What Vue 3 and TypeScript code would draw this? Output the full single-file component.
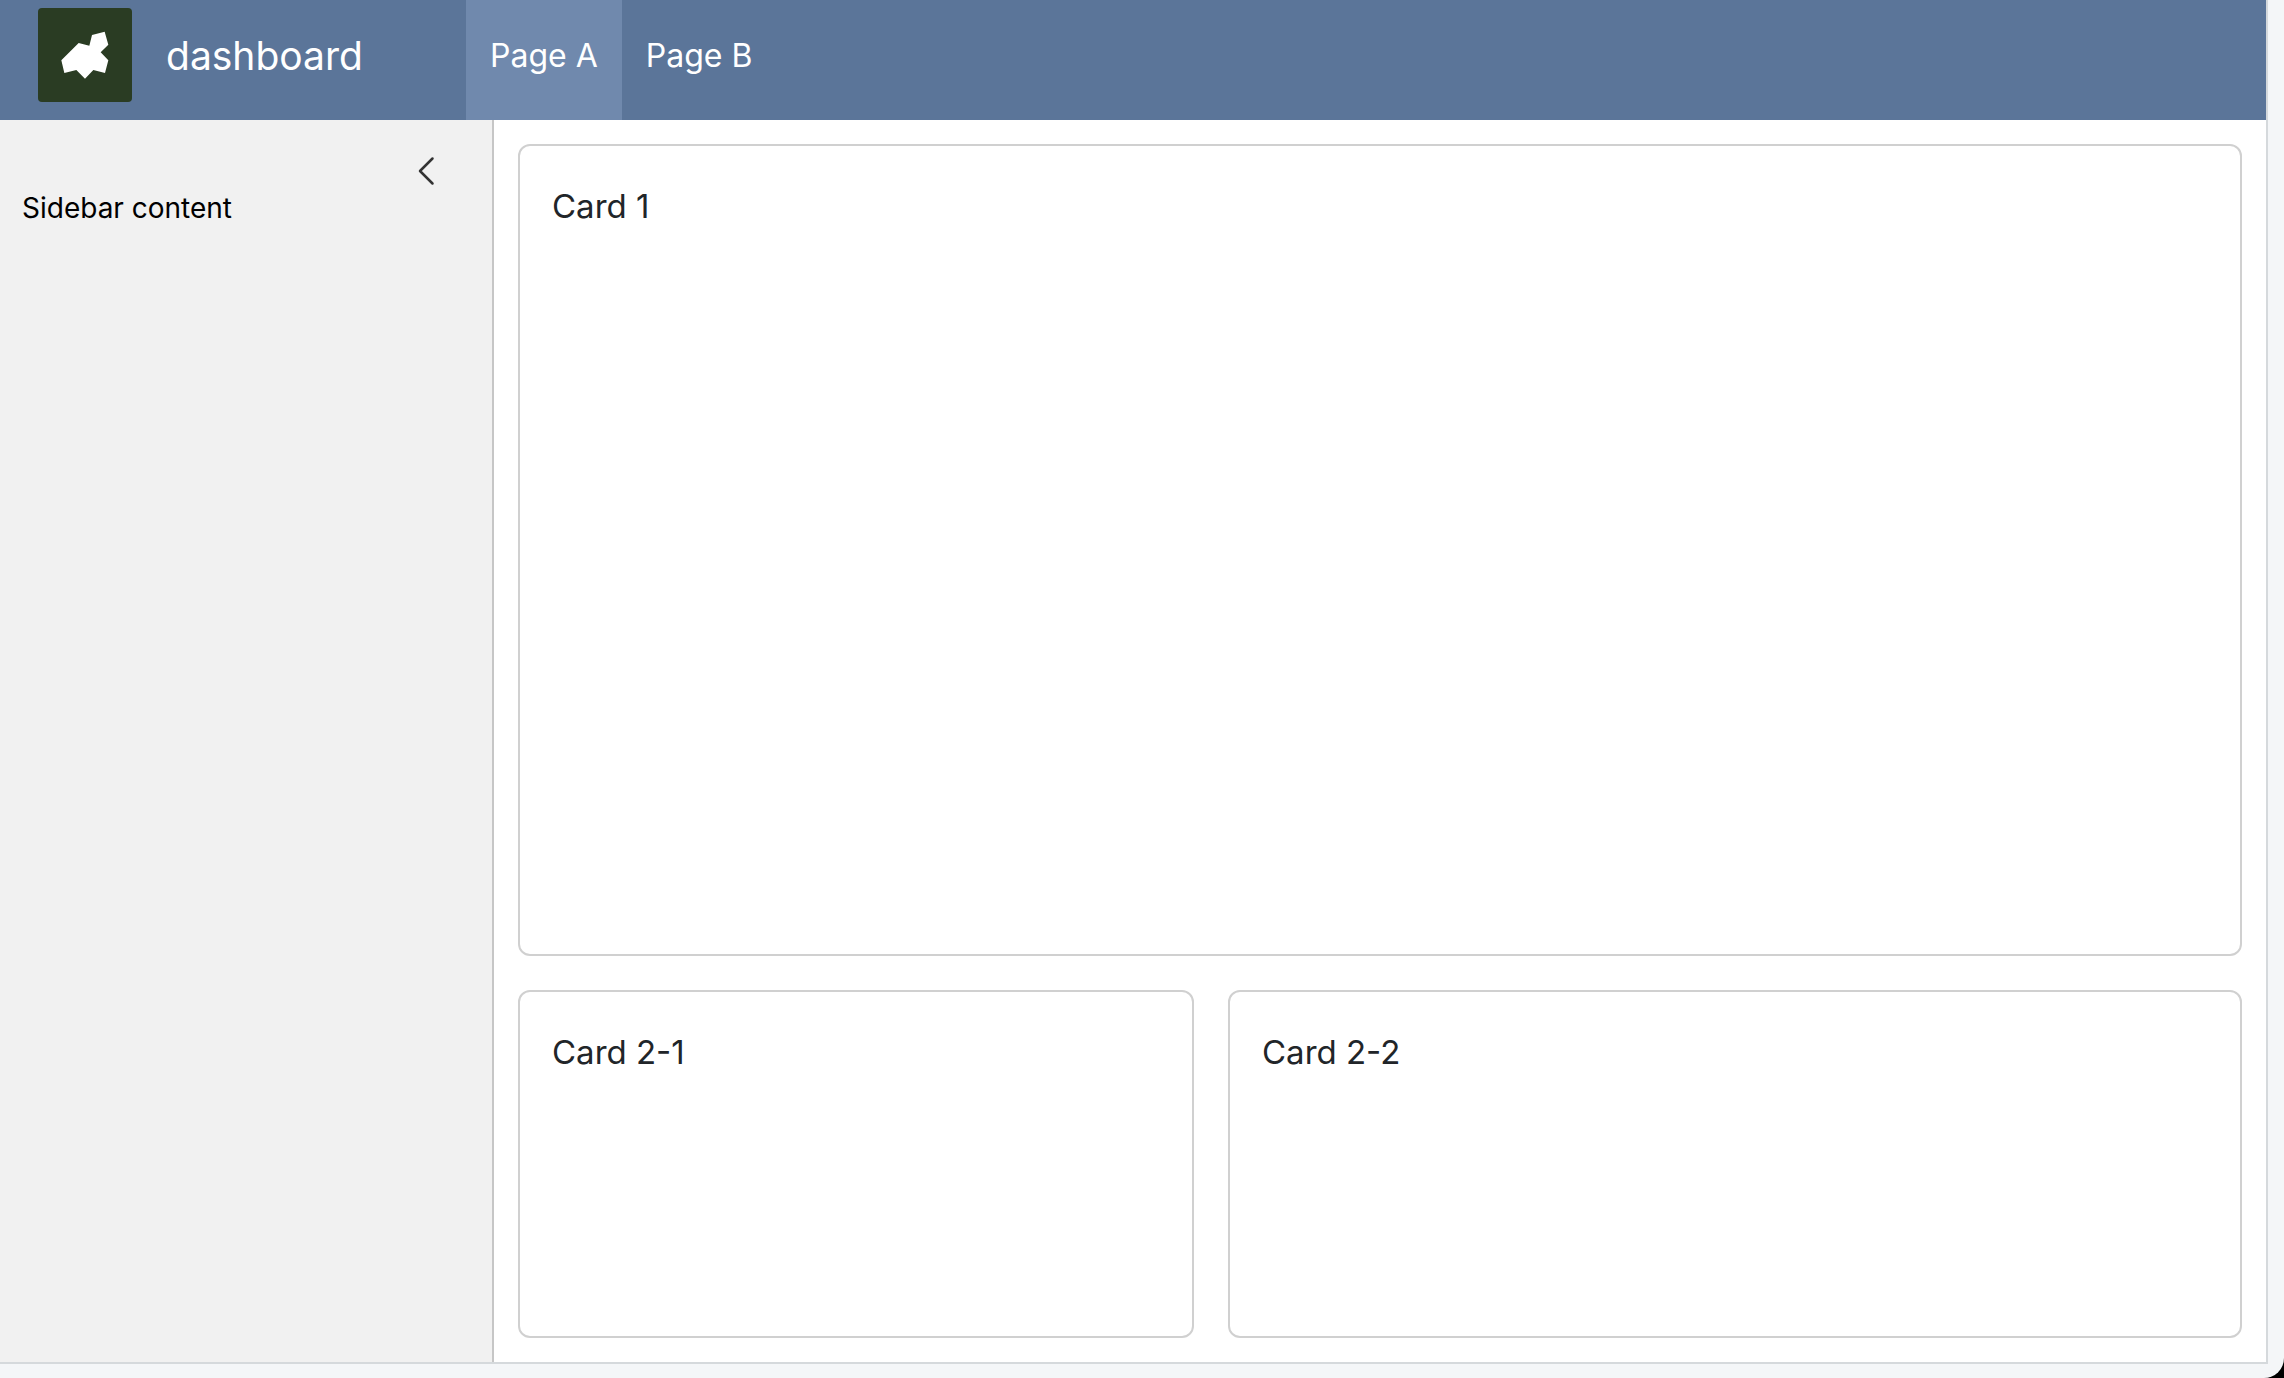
<script setup lang="ts">
import { ref } from 'vue'

interface Page {
  id: string
  label: string
}

const pages: Page[] = [
  { id: 'a', label: 'Page A' },
  { id: 'b', label: 'Page B' },
]

const current = ref('a')
const open = ref(true)
</script>

<template>
  <div class="window">
    <div class="dashboard">
      <header class="navbar">
        <svg class="logo" viewBox="0 0 282 282" aria-hidden="true">
          <rect width="282" height="282" rx="12" fill="#2a3c23" />
          <path
            d="M200 71 L211 110 L188 133 L211 157 L201 195 L166 186 L141 212 L115 186 L79 195 L70 157 L122 105 L154 113 L162 81 Z"
            fill="#fff"
          />
        </svg>
        <span class="title">dashboard</span>
        <nav class="tabs">
          <a
            v-for="page in pages"
            :key="page.id"
            :href="'#' + page.id"
            class="tab"
            :class="{ active: current === page.id }"
            @click.prevent="current = page.id"
          >{{ page.label }}</a>
        </nav>
      </header>
      <div class="body">
        <aside class="sidebar">
          <button class="toggle" type="button" aria-label="Toggle sidebar" @click="open = !open">
            <svg viewBox="0 0 64 64" width="32" height="32" aria-hidden="true">
              <path d="M45 9 L20 34 L45 59" fill="none" stroke="#333" stroke-width="5" stroke-linecap="round" stroke-linejoin="round" />
            </svg>
          </button>
          <p v-if="open" class="side-text">Sidebar content</p>
        </aside>
        <main class="content">
          <section class="card">Card 1</section>
          <div class="row">
            <section class="card">Card 2-1</section>
            <section class="card">Card 2-2</section>
          </div>
        </main>
      </div>
    </div>
  </div>
</template>

<style>
body {
  background: #000;
}
</style>

<style scoped>
.window {
  box-sizing: border-box;
  display: flex;
  height: 100vh;
  padding: 0 16px 14px 0;
  background: #f4f6f8;
  border-bottom-right-radius: 20px;
  font-family: Inter, "Liberation Sans", sans-serif;
  color: #212529;
}

.dashboard {
  flex: 1;
  display: flex;
  flex-direction: column;
  background: #fff;
  border: solid #d5d9dc;
  border-width: 0 2px 2px 0;
}

.navbar {
  box-sizing: border-box;
  display: flex;
  align-items: stretch;
  height: 120px;
  padding-left: 38px;
  background: #5b7599;
  color: #fff;
}

.logo {
  width: 94px;
  height: 94px;
  margin-top: 8px;
}

.title {
  width: 300px;
  padding-left: 34px;
  font-size: 39px;
  line-height: 112px;
}

.tabs {
  display: flex;
}

.tab {
  padding: 0 24px;
  font-size: 32px;
  line-height: 112px;
  color: inherit;
  text-decoration: none;
}

.tab.active {
  background: #7089ad;
}

.body {
  flex: 1;
  display: flex;
}

.sidebar {
  box-sizing: border-box;
  display: flex;
  flex-direction: column;
  width: 494px;
  padding: 34px 50px 0 22px;
  background: #f1f1f1;
  border-right: 2px solid #c6c6c6;
  color: #000;
}

.toggle {
  align-self: flex-end;
  display: flex;
  padding: 0;
  border: 0;
  background: none;
  cursor: pointer;
}

.side-text {
  margin: 2px 0 0;
  font-size: 28px;
  line-height: 40px;
}

.content {
  flex: 1;
  display: grid;
  grid-template-rows: minmax(0, 7fr) minmax(0, 3fr);
  gap: 34px;
  padding: 24px;
}

.row {
  display: grid;
  grid-template-columns: minmax(0, 2fr) minmax(0, 3fr);
  gap: 34px;
}

.card {
  box-sizing: border-box;
  padding: 38px 32px;
  border: 2px solid #d0d0d0;
  border-radius: 12px;
  font-size: 33px;
  line-height: 44px;
}
</style>
